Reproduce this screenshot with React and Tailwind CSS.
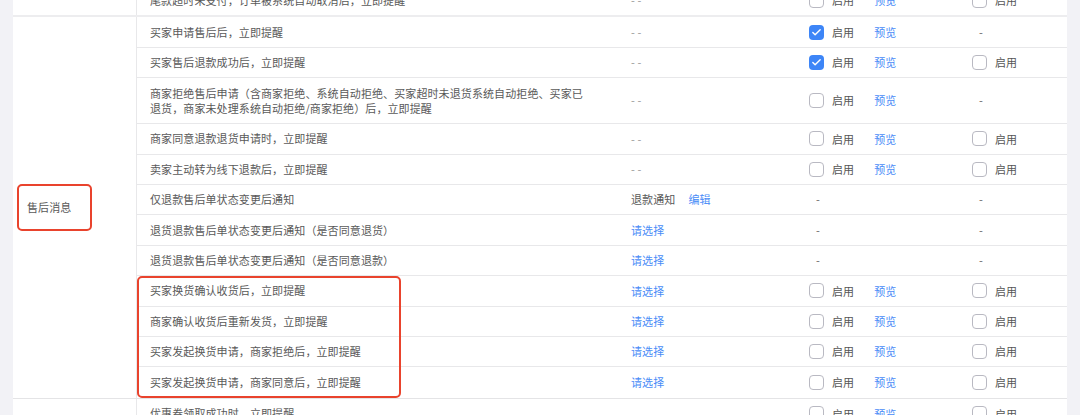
import { Check } from 'lucide-react';

const font = { fontFamily: '"Noto Sans CJK SC", "Noto Sans", sans-serif' };

function Box({ checked }) {
  return checked ? (
    <span className="w-[15px] h-[15px] rounded-[4px] bg-[#3d85f7] flex items-center justify-center shrink-0">
      <Check size={11} strokeWidth={3} className="text-white" />
    </span>
  ) : (
    <span className="w-[15px] h-[15px] rounded-[4px] border border-[#b9b9c2] bg-white shrink-0" />
  );
}

function Enable({ checked, preview }) {
  return (
    <div className="flex items-center pl-[14px]">
      <Box checked={checked} />
      <span className="ml-[8px] text-[#555]">启用</span>
      {preview && <span className="ml-[20px] text-[#4a8cf7]">预览</span>}
    </div>
  );
}

function Dash() {
  return <span className="pl-[21px] text-[#666]">-</span>;
}

// c3: 'dash' | 'select' | 'refund' ; c4/c5: 'on' | 'off' | 'dash'
function Row({ text, c3, c4, c5, tall, last }) {
  return (
    <div
      className={`flex items-center ${tall ? 'h-[46px]' : 'h-[30.4px]'} ${last ? '' : 'border-b border-[#e8e8ea]'}`}
    >
      <div className="w-[479px] pl-[13px] pr-[28px] text-[#595959] leading-[15px]">{text}</div>
      <div className="w-[179px] pl-[15px]">
        {c3 === 'dash' && <span className="text-[#999]">- -</span>}
        {c3 === 'select' && <span className="text-[#4a8cf7]">请选择</span>}
        {c3 === 'refund' && (
          <span>
            <span className="text-[#595959]">退款通知</span>
            <span className="ml-[13px] text-[#4a8cf7]">编辑</span>
          </span>
        )}
      </div>
      <div className="w-[163px]">
        {c4 === 'dash' ? <Dash /> : <Enable checked={c4 === 'on'} preview />}
      </div>
      <div className="flex-1">
        {c5 === 'dash' ? <Dash /> : <Enable checked={c5 === 'on'} />}
      </div>
    </div>
  );
}

const rows = [
  { text: '买家申请售后后，立即提醒', c3: 'dash', c4: 'on', c5: 'dash' },
  { text: '买家售后退款成功后，立即提醒', c3: 'dash', c4: 'on', c5: 'off' },
  {
    text: '商家拒绝售后申请（含商家拒绝、系统自动拒绝、买家超时未退货系统自动拒绝、买家已退货，商家未处理系统自动拒绝/商家拒绝）后，立即提醒',
    c3: 'dash', c4: 'off', c5: 'dash', tall: true,
  },
  { text: '商家同意退款退货申请时，立即提醒', c3: 'dash', c4: 'off', c5: 'off' },
  { text: '卖家主动转为线下退款后，立即提醒', c3: 'dash', c4: 'off', c5: 'off' },
  { text: '仅退款售后单状态变更后通知', c3: 'refund', c4: 'dash', c5: 'dash' },
  { text: '退货退款售后单状态变更后通知（是否同意退货）', c3: 'select', c4: 'dash', c5: 'dash' },
  { text: '退货退款售后单状态变更后通知（是否同意退款）', c3: 'select', c4: 'dash', c5: 'dash' },
];

const exchangeRows = [
  { text: '买家换货确认收货后，立即提醒', c3: 'select', c4: 'off', c5: 'off' },
  { text: '商家确认收货后重新发货，立即提醒', c3: 'select', c4: 'off', c5: 'off' },
  { text: '买家发起换货申请，商家拒绝后，立即提醒', c3: 'select', c4: 'off', c5: 'off' },
  { text: '买家发起换货申请，商家同意后，立即提醒', c3: 'select', c4: 'off', c5: 'off' },
];

export default function App() {
  return (
    <div className="w-[1080px] h-[415px] overflow-hidden bg-[#f2f2f6] text-[11px] tracking-[0.1px]" style={font}>
      <div className="mx-[13px] bg-white -mt-[15px]">
        {/* previous group (cut off) */}
        <div className="flex border-b-2 border-[#ededef]">
          <div className="w-[124px] border-r border-[#e8e8ea]" />
          <div className="flex-1">
            <Row text="尾款超时未支付，订单被系统自动取消后，立即提醒" c3="dash" c4="off" c5="off" last />
          </div>
        </div>

        {/* 售后消息 */}
        <div className="flex border-b border-[#e4e4e6]">
          <div className="w-[124px] border-r border-[#e8e8ea] flex items-center pl-[4px]">
            <div className="border-2 border-[#e9432d] rounded-[5px] pl-[8px] pr-[19px] py-[13px] text-[#595959]">
              售后消息
            </div>
          </div>
          <div className="flex-1">
            {rows.map(r => (
              <Row key={r.text} {...r} />
            ))}
            <div className="relative">
              {exchangeRows.map((r, i) => (
                <Row key={r.text} {...r} last={i === exchangeRows.length - 1} />
              ))}
              <div className="absolute left-0 top-0 bottom-0 w-[264px] border-2 border-[#e9432d] rounded-[5px] pointer-events-none" />
            </div>
          </div>
        </div>

        {/* next group (cut off) */}
        <div className="flex">
          <div className="w-[124px] border-r border-[#e8e8ea]" />
          <div className="flex-1">
            <Row text="优惠券领取成功时，立即提醒" c3="dash" c4="off" c5="off" last />
          </div>
        </div>
      </div>
    </div>
  );
}
